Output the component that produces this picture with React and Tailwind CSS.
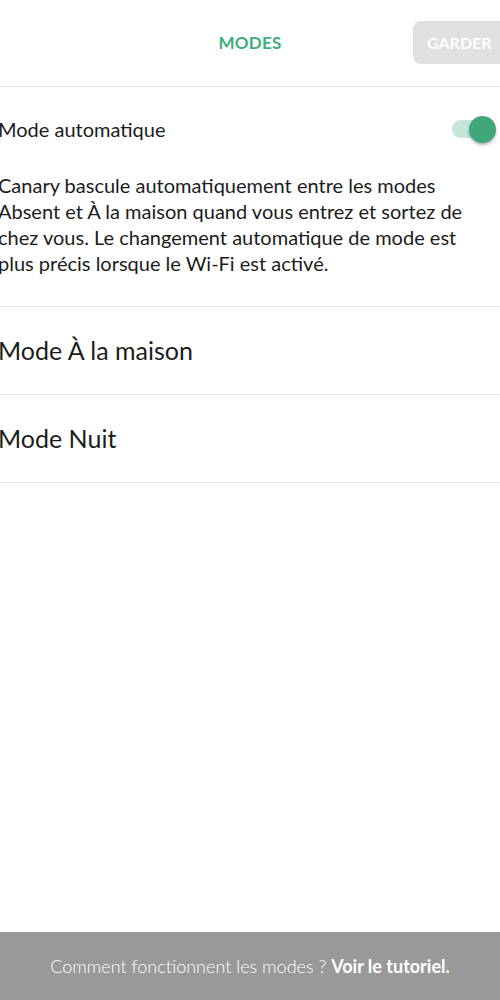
import React from 'react';

const Divider = () => <div className="h-px bg-[#e2e2e2]" />;

const Toggle = () => (
  <div className="relative w-[40px] h-[26px] flex items-center">
    <div className="w-[36px] h-[18px] rounded-full bg-[#c5e6d7]" />
    <div className="absolute right-[-4px] w-[27px] h-[27px] rounded-full bg-[#3fa77a] shadow-[0_2px_3px_rgba(0,0,0,0.3)]" />
  </div>
);

export default function App() {
  return (
    <div className="w-[500px] h-[1000px] bg-white flex flex-col overflow-hidden text-[#1c1c1c]" style={{ fontFamily: 'Lato, "Noto Sans", sans-serif' }}>
      {/* Header */}
      <div className="h-[86px] flex items-center relative">
        <div className="flex-1 text-center text-[17px] font-bold text-[#3fae7e] tracking-[0.2px]">MODES</div>
        <div className="absolute right-[-8px] top-[21px] w-[95px] h-[43px] rounded-[8px] bg-[#e0e0e0] flex items-center pl-[14px] text-white font-bold text-[16px]">
          GARDER
        </div>
      </div>
      <Divider />

      {/* Auto mode */}
      <div className="-ml-[2px] pt-[27px] pb-[30px]">
        <div className="flex items-center justify-between pr-[8px]">
          <span className="text-[20px]">Mode automatique</span>
          <Toggle />
        </div>
        <p className="mt-[28px] w-[472px] text-[20px] leading-[26px]">
          Canary bascule automatiquement entre les modes Absent et À la maison quand vous entrez et sortez de chez vous. Le changement automatique de mode est plus précis lorsque le Wi-Fi est activé.
        </p>
      </div>
      <Divider />

      <div className="-ml-[2px] h-[87px] flex items-center text-[25px]">Mode À la maison</div>
      <Divider />
      <div className="-ml-[2px] h-[87px] flex items-center text-[25px]">Mode Nuit</div>
      <Divider />

      <div className="flex-1" />

      {/* Bottom bar */}
      <div className="h-[68px] bg-[#999999] flex items-center justify-center text-white text-[18px]">
        <span className="font-light">Comment fonctionnent les modes ?&nbsp;</span>
        <span className="font-bold">Voir le tutoriel.</span>
      </div>
    </div>
  );
}
